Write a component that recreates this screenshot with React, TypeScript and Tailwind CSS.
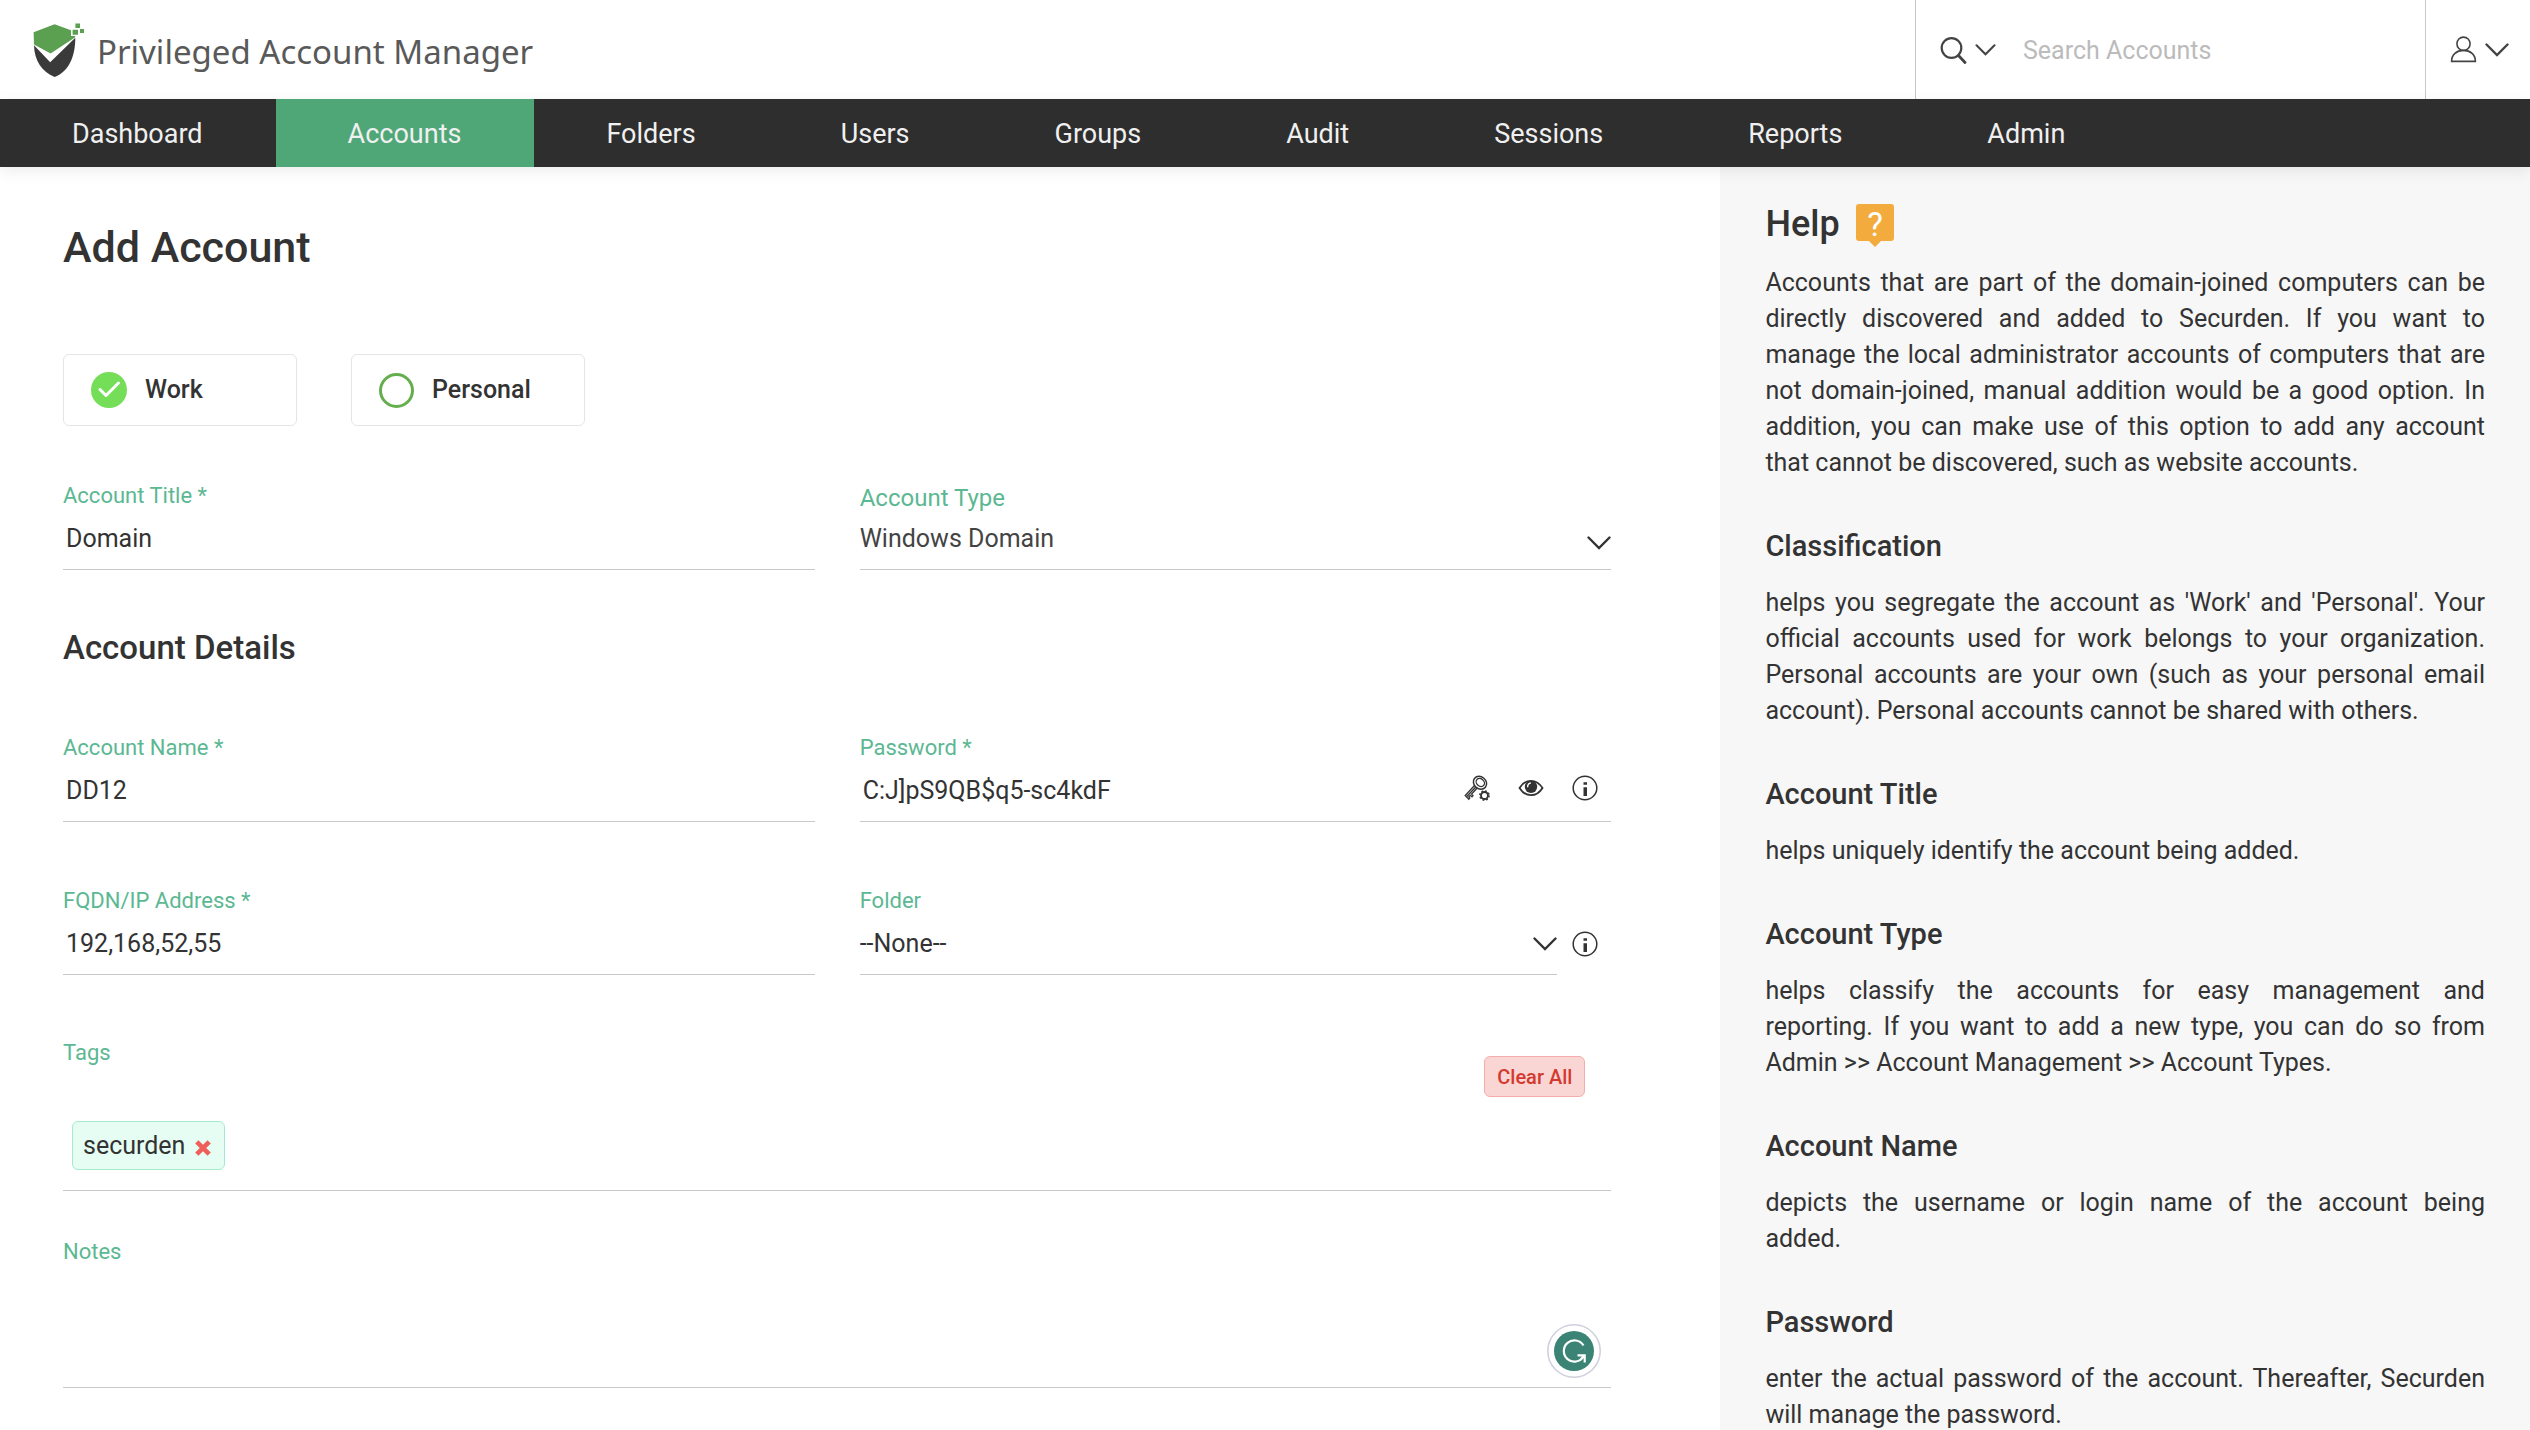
import React, { useState } from 'react';

const NAV_ITEMS = ['Dashboard', 'Accounts', 'Folders', 'Users', 'Groups', 'Audit', 'Sessions', 'Reports', 'Admin'];

const HELP_TOPICS = [
  {
    title: 'Classification',
    text: "helps you segregate the account as 'Work' and 'Personal'. Your official accounts used for work belongs to your organization. Personal accounts are your own (such as your personal email account). Personal accounts cannot be shared with others.",
  },
  { title: 'Account Title', text: 'helps uniquely identify the account being added.' },
  {
    title: 'Account Type',
    text: 'helps classify the accounts for easy management and reporting.\u00a0If you want to add a new type, you can do so from Admin >> Account Management >> Account Types.',
  },
  { title: 'Account Name', text: 'depicts the username or login name of the account being added.\u00a0\u00a0' },
  {
    title: 'Password',
    text: 'enter the actual password of the account. Thereafter, Securden will manage the password.',
  },
];

const Logo = () => (
  <svg viewBox="33 22 52 54" className="w-[52px] h-[54px]" aria-hidden="true">
    <path d="M33.6 31.2 54.6 23.3 71 29.3V35H75.2V36.2L50.6 52.6 34 43.4Z" fill="#5b9f50" />
    <path d="M34 44.2 50.2 61.2 75.3 36.8C75.3 57 68 71 54.6 76 42 70.5 34.4 60 34 44.2Z" fill="#3a3a3a" />
    <path d="M75.4 22.4H80V27H75.4ZM72.6 28.8H78V33.8H72.6ZM80 28H84V32H80Z" fill="#5b9f50" />
  </svg>
);

const Chevron = ({ className }: { className?: string }) => (
  <svg viewBox="0 0 24 14" fill="none" stroke="currentColor" strokeWidth="2.4" strokeLinecap="round" className={className} aria-hidden="true">
    <path d="M1.5 1.5 12 12 22.5 1.5" strokeLinejoin="miter" />
  </svg>
);

const InfoIcon = () => (
  <svg viewBox="0 0 26 26" className="size-[26px]" aria-hidden="true">
    <circle cx="13" cy="13" r="11.8" fill="none" stroke="#333" strokeWidth="1.5" />
    <path d="M11.5 7.2H15V9.8H11.5ZM11.5 12.2H15V21H11.5Z" fill="#333" />
  </svg>
);

const KeyIcon = () => (
  <svg viewBox="0 0 26 26" className="size-[26px]" fill="none" stroke="#333" aria-hidden="true">
    <ellipse cx="16" cy="7.8" rx="7" ry="6" transform="rotate(40 16 7.8)" strokeWidth="1.5" />
    <ellipse cx="16.3" cy="7.5" rx="4.5" ry="3.6" transform="rotate(40 16.3 7.5)" strokeWidth="1.3" />
    <path d="M10.5 10.5 1.2 20.5 4.8 24.3 5.8 23 4.8 21.8 6.3 20.3 8 21.8 9 20.5 7.6 19 13 13.3M11.8 12 3 21.3" strokeWidth="1.3" />
    <circle cx="20.5" cy="20.5" r="3.5" strokeWidth="1.9" />
    <circle cx="20.5" cy="20.5" r="4.7" strokeWidth="1.4" strokeDasharray="1.85 1.841" />
  </svg>
);

const EyeIcon = () => (
  <svg viewBox="0 0 26 18" className="w-[26px] h-[18px]" aria-hidden="true">
    <path d="M1.5 9C4.5 4.2 8.5 1.8 13 1.8S21.5 4.2 24.5 9C21.5 13.8 17.5 16.2 13 16.2S4.5 13.8 1.5 9Z" fill="none" stroke="#333" strokeWidth="1.8" />
    <circle cx="13" cy="7.8" r="6.2" fill="#333" />
    <path d="M9.6 8.2C9.6 5.7 10.8 4.3 12.8 4" fill="none" stroke="#fff" strokeWidth="1.4" />
  </svg>
);

const Header = () => (
  <header className="flex h-[99px] shrink-0 bg-white">
    <div className="flex flex-1 items-center gap-3 pl-[33px]">
      <Logo />
      <span className="pt-1 font-['Noto_Sans',sans-serif] text-[33px] leading-10 text-[#595959]">Privileged Account Manager</span>
    </div>
    <form className="flex w-[510px] items-center border-l border-[#c8c8c8] pl-6" role="search">
      <button type="button" aria-label="Search scope" className="flex items-center gap-2 text-[#444]">
        <svg viewBox="0 0 27 28" className="w-[27px] h-7" fill="none" stroke="currentColor" aria-hidden="true">
          <circle cx="11.5" cy="12" r="9.8" strokeWidth="2.2" />
          <path d="M18.5 19.5 25 26.5" strokeWidth="2.8" strokeLinecap="round" />
        </svg>
        <Chevron className="w-[21px] h-3" />
      </button>
      <input
        type="text"
        aria-label="Search Accounts"
        placeholder="Search Accounts"
        className="ml-[27px] h-12 min-w-0 flex-1 pt-0.5 text-[25px] outline-none placeholder:text-[#bbb]"
      />
    </form>
    <button type="button" aria-label="User menu" className="flex w-[105px] items-center gap-2 border-l border-[#c8c8c8] pl-6 text-[#444]">
      <svg viewBox="0 0 27 27" className="size-[27px]" fill="none" stroke="currentColor" strokeWidth="1.6" aria-hidden="true">
        <ellipse cx="13.5" cy="7.8" rx="6.6" ry="6.7" />
        <path d="M1.6 25.4C1.6 18.5 6.5 14.4 13.5 14.4S25.4 18.5 25.4 25.4Z" />
      </svg>
      <Chevron className="w-6 h-3.5" />
    </button>
  </header>
);

const NavBar = () => (
  <nav className="relative z-10 flex h-[68px] shrink-0 bg-[#2e2e2e] shadow-[0_4px_14px_rgba(0,0,0,0.08)]">
    {NAV_ITEMS.map((item) => (
      <a
        key={item}
        href="#"
        className={`flex items-center pl-[72px] pr-[73px] pt-0.5 text-[27px] text-[#f0f0f0] ${item === 'Accounts' ? 'bg-[#4fa778]' : ''}`}
      >
        {item}
      </a>
    ))}
  </nav>
);

const ClassOption = ({ label, checked, onChange }: { label: string; checked: boolean; onChange: () => void }) => (
  <label className="flex h-[72px] w-[234px] cursor-pointer items-center rounded-md border border-[#e5e5e5] pl-[27px]">
    <span className="relative flex">
      <input
        type="radio"
        name="classification"
        checked={checked}
        onChange={onChange}
        className="size-[35px] appearance-none rounded-full border-3 border-[#65ae4e] checked:size-9 checked:border-0 checked:bg-[#75de59]"
      />
      {checked && (
        <svg viewBox="0 0 36 36" className="pointer-events-none absolute inset-0" fill="none" stroke="#fff" strokeWidth="3" strokeLinecap="round" strokeLinejoin="round" aria-hidden="true">
          <path d="M9 17.5 15 23.5 27.5 11" />
        </svg>
      )}
    </span>
    <span className="pl-[18px] text-[25px] font-medium">{label}</span>
  </label>
);

const TextField = ({ id, label, value, children }: { id: string; label: string; value: string; children?: React.ReactNode }) => (
  <div>
    <label htmlFor={id} className="block text-[22px] leading-6 text-[#5bb892]">{label}</label>
    <div className="flex h-[62px] items-center border-b border-[#c8c8c8]">
      <input id={id} type="text" defaultValue={value} className="h-full min-w-0 flex-1 pl-[3px] text-[25px] outline-none" />
      {children}
    </div>
  </div>
);

const App = () => {
  const [kind, setKind] = useState('Work');
  const [tags, setTags] = useState(['securden']);

  return (
    <div className="flex h-screen flex-col overflow-hidden bg-white font-[Roboto,sans-serif] text-[#333]">
      <Header />
      <NavBar />

      <div className="flex min-h-0 flex-1">
        <main className="w-[68%] pl-[63px] pr-[109px] pt-[52px]">
          <h1 className="text-[43px] font-medium leading-14">Add Account</h1>

          <div className="mt-[79px] flex gap-[54px]">
            {['Work', 'Personal'].map((label) => (
              <ClassOption key={label} label={label} checked={kind === label} onChange={() => setKind(label)} />
            ))}
          </div>

          <div className="mt-[58px] grid grid-cols-2 gap-x-[45px]">
            <TextField id="title" label="Account Title *" value="Domain" />
            <div className="relative">
              <label htmlFor="type" className="block text-2xl leading-7 text-[#5bb892]">Account Type</label>
              <select id="type" className="block h-[58px] w-full appearance-none border-b border-[#c8c8c8] pb-1 text-[25px] text-[#444] outline-none">
                <option>Windows Domain</option>
              </select>
              <Chevron className="pointer-events-none absolute bottom-5 right-0 w-6 h-3.5" />
            </div>
          </div>

          <h2 className="mt-[58px] text-[33px] font-medium leading-10">Account Details</h2>

          <div className="mt-[68px] grid grid-cols-2 gap-x-[45px] gap-y-[67px]">
            <TextField id="name" label="Account Name *" value="DD12" />
            <TextField id="password" label="Password *" value="C:J]pS9QB$q5-sc4kdF">
              <div className="flex items-center gap-7 pb-1.5 pr-[13px]">
                <button type="button" aria-label="Generate password"><KeyIcon /></button>
                <button type="button" aria-label="Show password"><EyeIcon /></button>
                <button type="button" aria-label="Password info"><InfoIcon /></button>
              </div>
            </TextField>
            <TextField id="address" label="FQDN/IP Address *" value="192,168,52,55" />
            <div>
              <label htmlFor="folder" className="block text-[22px] leading-6 text-[#5bb892]">Folder</label>
              <div className="flex items-center">
                <div className="relative flex-1">
                  <select id="folder" className="block h-[62px] w-full appearance-none border-b border-[#c8c8c8] text-[25px] outline-none">
                    <option>--None--</option>
                  </select>
                  <Chevron className="pointer-events-none absolute right-0 top-6 w-6 h-3.5" />
                </div>
                <button type="button" aria-label="Folder info" className="ml-[15px] mr-[13px]"><InfoIcon /></button>
              </div>
            </div>
          </div>

          <section className="mt-[66px] border-b border-[#c8c8c8] pb-5">
            <div className="flex items-start justify-between">
              <h3 className="text-[22px] leading-6 text-[#5bb892]">Tags</h3>
              <button
                type="button"
                onClick={() => setTags([])}
                className="mr-[26px] mt-[15px] h-[41px] rounded-md border border-[#f5acac] bg-[#f9d5d4] px-3 text-xl font-medium text-[#d33a2f]"
              >
                Clear All
              </button>
            </div>
            <div className="mt-6 flex h-[49px] gap-2 pl-[9px]">
              {tags.map((tag) => (
                <span key={tag} className="flex items-center rounded-md border border-[#a5ebcb] bg-[#e6fdf4] pl-2.5 pr-[13px] text-[25px]">
                  {tag}
                  <button type="button" aria-label={`Remove ${tag}`} onClick={() => setTags(tags.filter((t) => t !== tag))} className="ml-2.5 mt-1">
                    <svg viewBox="0 0 16 16" className="size-4" stroke="#ee5f5b" strokeWidth="4.6" aria-hidden="true">
                      <path d="M1.8 1.8 14.2 14.2M14.2 1.8 1.8 14.2" />
                    </svg>
                  </button>
                </span>
              ))}
            </div>
          </section>

          <div className="relative mt-[49px]">
            <label htmlFor="notes" className="block text-[22px] leading-6 text-[#5bb892]">Notes</label>
            <textarea id="notes" className="block h-[124px] w-full resize-none border-b border-[#c8c8c8] text-[25px] outline-none" />
            <button type="button" aria-label="Check writing" className="absolute bottom-2.5 right-2.5">
              <svg viewBox="0 0 54 54" className="size-[54px]" aria-hidden="true">
                <circle cx="27" cy="27" r="26.2" fill="#fff" stroke="#d0d0de" strokeWidth="1.6" />
                <circle cx="27" cy="27" r="20" fill="#3a8375" />
                <path d="M36.5 21.5A10.6 10.6 0 1 0 36.5 32.5M30.5 31.3H37.7V38.5M37.5 31.5 33.5 35.5" fill="none" stroke="#fff" strokeWidth="2.2" />
              </svg>
            </button>
          </div>
        </main>

        <aside className="w-[32%] bg-[#f7f7f7] px-[45px] pt-[37px]">
          <div className="flex h-[43px] items-start gap-4">
            <h2 className="text-4xl font-medium leading-10">Help</h2>
            <svg viewBox="0 0 38 43" className="h-[43px] w-[38px]" aria-hidden="true">
              <path d="M3 0H35Q38 0 38 3V34Q38 37 35 37H25L19 43 13 37H3Q0 37 0 34V3Q0 0 3 0Z" fill="#f2ab3c" />
              <text x="19" y="32" textAnchor="middle" fill="#fff" className="font-[Roboto,sans-serif] text-[33px]">?</text>
            </svg>
          </div>
          <p className="mt-[18px] text-justify text-[25px] leading-9">
            Accounts that are part of the domain-joined computers can be directly discovered and added to Securden. If you want to manage the local administrator accounts of computers that are not domain-joined, manual addition would be a good option. In addition, you can make use of this option to add any account that cannot be discovered, such as website accounts.
          </p>
          {HELP_TOPICS.map((topic) => (
            <section key={topic.title} className="mt-[47px]">
              <h3 className="text-[29px] font-medium leading-9">{topic.title}</h3>
              <p className="mt-[21px] text-justify text-[25px] leading-9">{topic.text}</p>
            </section>
          ))}
        </aside>
      </div>
    </div>
  );
};

export default App;
